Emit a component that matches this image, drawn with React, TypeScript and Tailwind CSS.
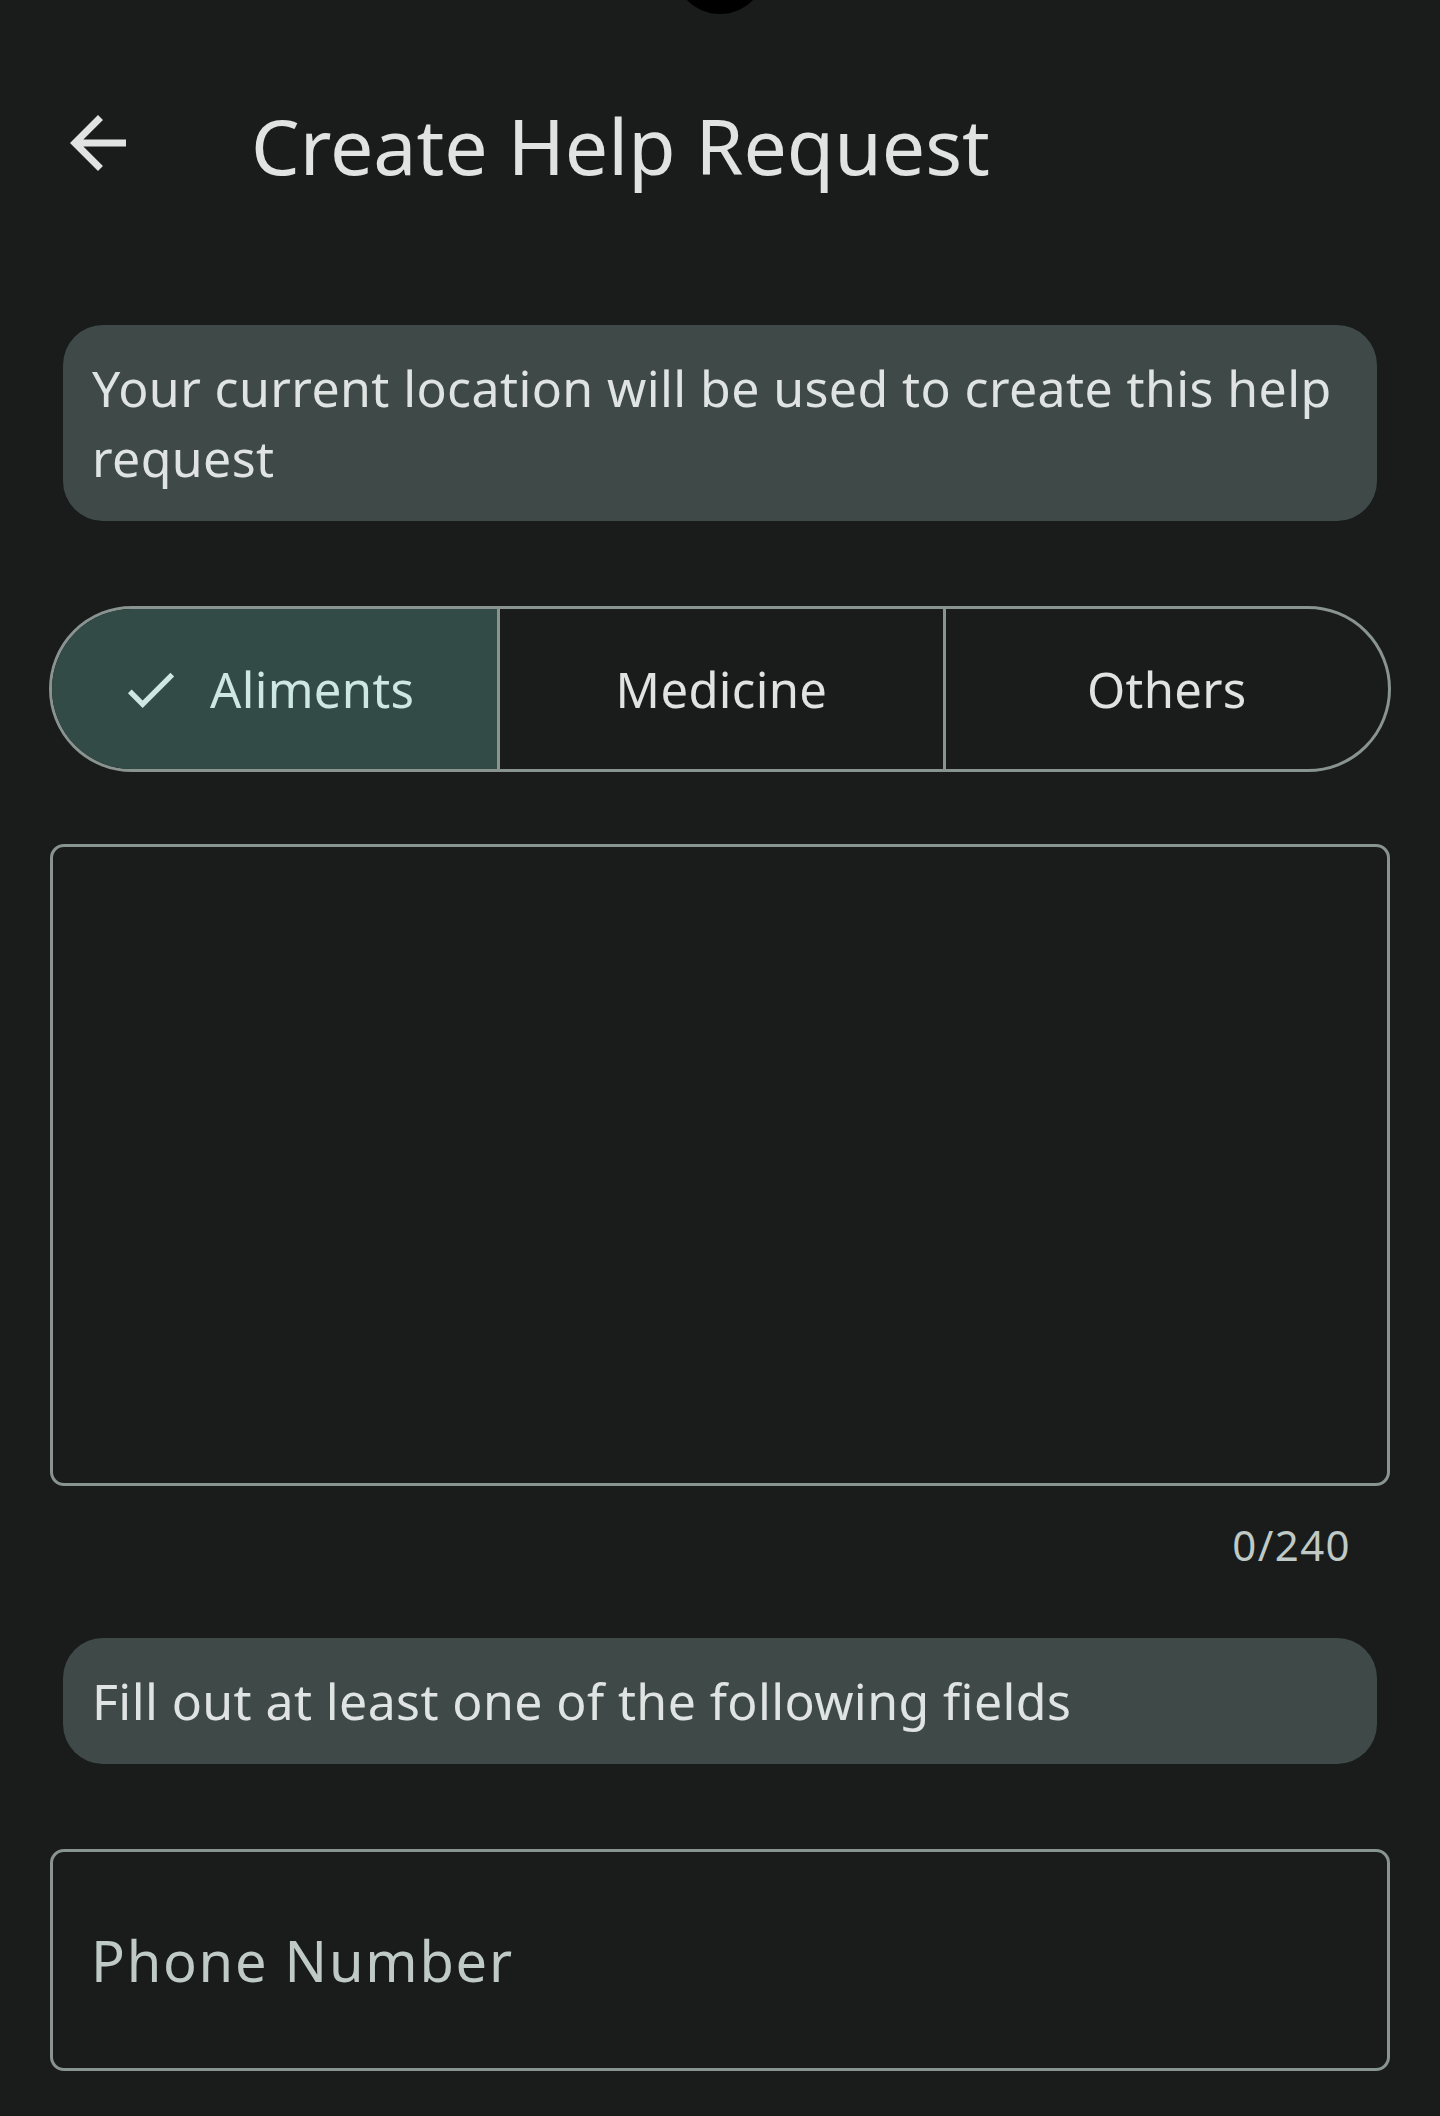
import React, { useState } from 'react';

const categories = ['Aliments', 'Medicine', 'Others'];

const ArrowBack: React.FC = () => (
  <svg viewBox="0 0 24 24" className="w-[84px] h-[84px]" fill="#e0e3e1">
    <path d="M20 11H7.83l5.59-5.59L12 4l-8 8 8 8 1.41-1.41L7.83 13H20v-2z" />
  </svg>
);

const CheckIcon: React.FC = () => (
  <svg viewBox="0 0 24 24" className="w-[63px] h-[63px] shrink-0" fill="#cde8e2">
    <path d="M9 16.17L4.83 12l-1.42 1.41L9 19 21 7l-1.41-1.41z" />
  </svg>
);

const InfoBox: React.FC<{ children: React.ReactNode }> = ({ children }) => (
  <div className="mx-[63px] rounded-[40px] bg-[#3f4948] px-[29px] py-[28px] text-[50px] leading-[70px] tracking-[0.4px] text-[#dfe4e2]">
    {children}
  </div>
);

const App: React.FC = () => {
  const [category, setCategory] = useState('Aliments');
  const [details, setDetails] = useState('');
  const [phone, setPhone] = useState('');

  return (
    <div className="relative min-h-[2116px] w-full overflow-hidden bg-[#191c1b] font-['Noto_Sans',sans-serif]">
      {/* camera cutout */}
      <div className="absolute left-1/2 top-[-78px] h-[92px] w-[92px] -translate-x-1/2 rounded-full bg-black" />

      <div className="mt-[101px] flex h-[84px] items-center pl-[56px]">
        <button type="button" className="flex items-center justify-center">
          <ArrowBack />
        </button>
        <h1 className="ml-[111px] mt-[4px] text-[77px] leading-none font-normal text-[#e0e3e1]">Create Help Request</h1>
      </div>

      <div className="mt-[140px]">
        <InfoBox>Your current location will be used to create this help request</InfoBox>
      </div>

      <div className="mx-[49px] mt-[85px] grid h-[166px] grid-cols-3 overflow-hidden rounded-full border-[3px] border-[#899390]">
        {categories.map((c, i) => {
          const selected = c === category;
          return (
            <button
              key={c}
              type="button"
              onClick={() => setCategory(c)}
              className={
                'flex items-center justify-center text-[49px] leading-none tracking-[0.35px] ' +
                (i > 0 ? 'border-l-[3px] border-[#899390] ' : '') +
                (selected ? 'bg-[#334b47] pr-[16px] text-[#cde8e2]' : 'text-[#e0e3e1]')
              }
            >
              {selected && <CheckIcon />}
              <span className={selected ? 'ml-[28px]' : ''}>{c}</span>
            </button>
          );
        })}
      </div>

      <div className="mt-[72px] px-[50px]">
        <textarea
          value={details}
          onChange={e => setDetails(e.target.value.slice(0, 240))}
          className="block h-[642px] w-full resize-none rounded-[14px] border-[3px] border-[#899390] bg-transparent p-[40px] text-[56px] tracking-[1.75px] text-[#e0e3e1] outline-none"
        />
      </div>
      <div className="mt-[31px] pr-[89px] text-right text-[42px] leading-[56px] tracking-[1.4px] text-[#bfc9c5]">{details.length}/240</div>

      <div className="mt-[65px]">
        <InfoBox>Fill out at least one of the following fields</InfoBox>
      </div>

      <div className="mx-[50px] mt-[85px] flex h-[222px] items-center rounded-[14px] border-[3px] border-[#899390] px-[38px]">
        <input
          type="tel"
          value={phone}
          onChange={e => setPhone(e.target.value)}
          placeholder="Phone Number"
          className="w-full bg-transparent text-[56px] tracking-[1.75px] text-[#e0e3e1] outline-none placeholder:text-[#bfc9c5]"
        />
      </div>
    </div>
  );
};

export default App;
